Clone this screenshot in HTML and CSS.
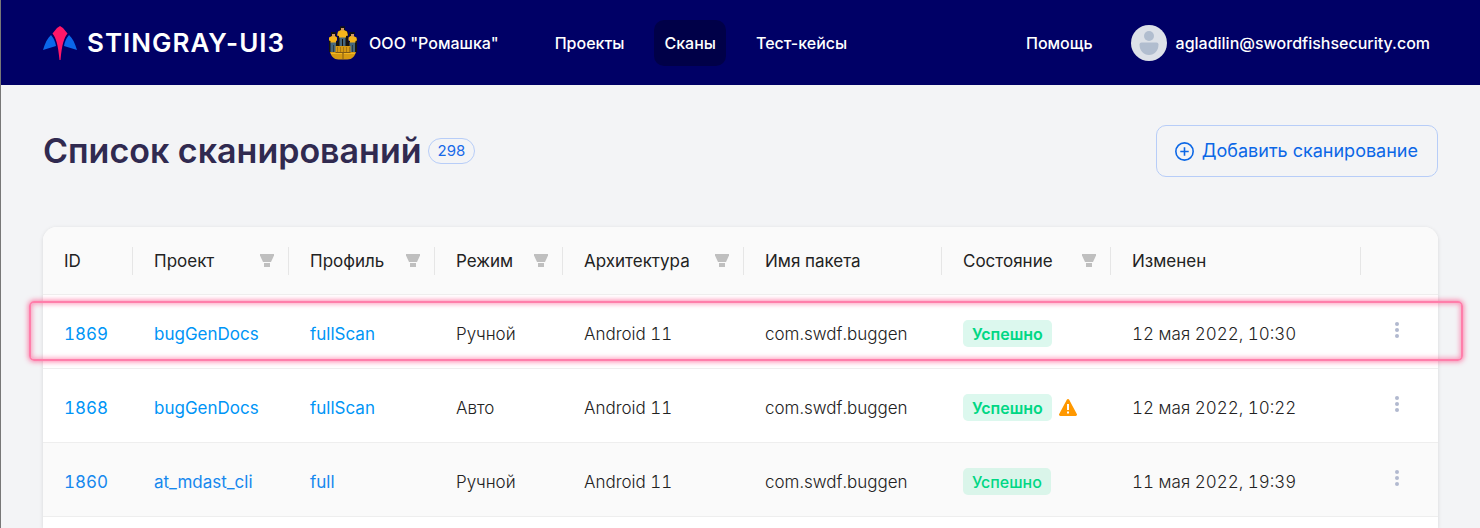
FILE: index.html
```html
<!DOCTYPE html>
<html lang="ru">
<head>
<meta charset="utf-8">
<title>Список сканирований</title>
<link rel="stylesheet" href="styles.css">
</head>
<body>
<svg class="sprite" aria-hidden="true">
  <symbol id="filter" viewBox="0 0 14 13"><path d="M0 0h14v1.500L11 8H3L0 1.500z"/><path d="M4 9h6v4H4z"/></symbol>
  <symbol id="dots" viewBox="0 0 4 16"><circle cx="2" cy="2" r="2"/><circle cx="2" cy="8" r="2"/><circle cx="2" cy="14" r="2"/></symbol>
</svg>
<header class="topbar">
  <a class="brand" href="#">
    <svg class="brand-mark" viewBox="0 0 34 34" aria-hidden="true">
      <path fill="#0b67ea" d="M8 9C4.500 12 2 17 0 24l13-4q-.8-6-5-11zM26 9c3.500 3 6 8 8 15l-13-4q.8-6 5-11z"/>
      <path fill="#ff1768" d="M17 0l-3 2-4.500 5.500C13 12 15 18 16.500 34h1C19 18 21 12 24.500 7.500L20 2z"/>
    </svg>
    <span>STINGRAY-UI3</span>
  </a>
  <a class="company" href="#">
    <svg class="company-logo" viewBox="0 0 28 34" aria-hidden="true">
      <path fill="#17130c" d="M11 .5h5V4l3 2v9l1 1V8l1-2h4v4l3 2v14H0V12l2-2V6h4l1 2v8l2-1V6l2-2z"/>
      <path fill="#46677c" d="M10.500 11h6v9h-2.500v-7h-1v7h-2.500zM1.500 16h5.500v10H4.500v-7h-.5v7H1.500zM20.500 16H26v10h-2v-7h-.5v7h-3z"/>
      <path fill="#f5b41c" d="M9 5.500L12 4h3l3 1.500 1 4-2 .5v1.500h-7V10l-2-.5zM0 11.500L3 10h3l2 1.500v3l-1 .5v1.500H1.500V15L0 14.500zM19.500 11.500l2-1.500h3l3 1.500.5 3-1.500.5v1.500h-5.500V15l-1.500-.5z"/>
      <path fill="#d19761" d="M12 2h3v2.500h-3zM3 8h3v2.500H3zM22 8h3v2.500h-3z"/>
      <path fill="#101017" d="M12 .5h4V2h-4zM3 6h4v2H3zM22 6h4v2h-4z"/>
      <path fill="#d69a12" d="M6.500 20h15v6H27c-1 4-4 7.500-8.500 7.500h-9C5 33.500 2 30 1 26h5.500z"/>
      <path fill="#a77713" d="M8 21h1v5H8zM11 21h1v5h-1zM14 21h1v5h-1zM17 21h1v5h-1zM20 21h1v5h-1z"/>
      <path fill="#f2b723" d="M2 27h11v1H2zM15 27h11v1H15z"/>
      <path fill="#815b16" d="M13.500 27h1v6.500h-1zM6.500 26h15v1h-15z"/>
    </svg>
    <span>ООО "Ромашка"</span>
  </a>
  <nav class="nav">
    <a href="#">Проекты</a>
    <a class="active" href="#" aria-current="page">Сканы</a>
    <a href="#">Тест-кейсы</a>
  </nav>
  <a class="help" href="#">Помощь</a>
  <a class="user" href="#">
    <svg class="avatar" viewBox="0 0 36 36" aria-hidden="true">
      <circle cx="18" cy="18" r="18" fill="#dde1e8"/>
      <circle cx="18" cy="11" r="5" fill="#b1bdcf"/>
      <path fill="#b1bdcf" d="M10.500 17.500h15a2 2 0 0 1 2 2c0 6-4 10.500-9.500 10.500S8.500 25.500 8.500 19.500a2 2 0 0 1 2-2z"/>
    </svg>
    <span>agladilin@swordfishsecurity.com</span>
  </a>
</header>
<main class="page">
  <div class="page-head">
    <h1>Список сканирований</h1>
    <span class="count">298</span>
    <button class="add" type="button">
      <svg viewBox="0 0 18 18" aria-hidden="true"><circle cx="9" cy="9" r="8.200"/><path d="M9 5v8M5 9h8"/></svg>
      <span>Добавить сканирование</span>
    </button>
  </div>
  <div class="card">
    <table class="scans">
      <colgroup><col class="c-id"><col class="c-project"><col class="c-profile"><col class="c-mode"><col class="c-arch"><col class="c-package"><col class="c-state"><col class="c-date"><col class="c-menu"></colgroup>
      <thead>
        <tr>
          <th><div class="th">ID</div></th>
          <th><div class="th">Проект<button type="button" aria-label="Фильтр: проект"><svg><use href="#filter"/></svg></button></div></th>
          <th><div class="th">Профиль<button type="button" aria-label="Фильтр: профиль"><svg><use href="#filter"/></svg></button></div></th>
          <th><div class="th">Режим<button type="button" aria-label="Фильтр: режим"><svg><use href="#filter"/></svg></button></div></th>
          <th><div class="th">Архитектура<button type="button" aria-label="Фильтр: архитектура"><svg><use href="#filter"/></svg></button></div></th>
          <th><div class="th">Имя пакета</div></th>
          <th><div class="th">Состояние<button type="button" aria-label="Фильтр: состояние"><svg><use href="#filter"/></svg></button></div></th>
          <th><div class="th">Изменен</div></th>
          <th><div class="th"></div></th>
        </tr>
      </thead>
      <tbody>
        <tr class="marked">
          <td><a href="#">1869</a></td><td><a href="#">bugGenDocs</a></td><td><a href="#">fullScan</a></td><td>Ручной</td><td>Android 11</td><td>com.swdf.buggen</td>
          <td><div class="state"><span class="tag">Успешно</span></div></td>
          <td>12 мая 2022, 10:30</td>
          <td><button class="menu" type="button" aria-label="Действия"><svg><use href="#dots"/></svg></button></td>
        </tr>
        <tr>
          <td><a href="#">1868</a></td><td><a href="#">bugGenDocs</a></td><td><a href="#">fullScan</a></td><td>Авто</td><td>Android 11</td><td>com.swdf.buggen</td>
          <td><div class="state"><span class="tag">Успешно</span><svg class="warn" viewBox="0 0 18 17" role="img" aria-label="Предупреждение"><path fill="#ff9800" d="M7.800.7a1.400 1.400 0 0 1 2.400 0l7.600 14.200a1.400 1.400 0 0 1-1.200 2.100H1.400a1.400 1.400 0 0 1-1.200-2.100z"/><path fill="#fff" d="M8 5h2v6H8zM8 12.500h2v2H8z"/></svg></div></td>
          <td>12 мая 2022, 10:22</td>
          <td><button class="menu" type="button" aria-label="Действия"><svg><use href="#dots"/></svg></button></td>
        </tr>
        <tr class="hovered">
          <td><a href="#">1860</a></td><td><a href="#">at_mdast_cli</a></td><td><a href="#">full</a></td><td>Ручной</td><td>Android 11</td><td>com.swdf.buggen</td>
          <td><div class="state"><span class="tag">Успешно</span></div></td>
          <td>11 мая 2022, 19:39</td>
          <td><button class="menu" type="button" aria-label="Действия"><svg><use href="#dots"/></svg></button></td>
        </tr>
      </tbody>
    </table>
  </div>
</main>
</body>
</html>
```
FILE: styles.css
```css
* { box-sizing: border-box; }
body {
  margin: 0;
  min-height: 100vh;
  display: flex;
  flex-direction: column;
  border-left: 1px solid #777;
  background: #f3f4f6;
  color: #222;
  font: 300 17px/24px Inter, "Noto Sans", sans-serif;
}
a { color: inherit; text-decoration: none; }
button { font: inherit; border: 0; background: none; padding: 0; cursor: pointer; }
.sprite { display: none; }

.topbar {
  display: flex;
  align-items: center;
  height: 85px;
  padding: 0 50px 0 42px;
  background: #000066;
  color: #fff;
  font-size: 16px;
  font-weight: 500;
  white-space: nowrap;
}
.brand { display: flex; align-items: center; gap: 10px; font-size: 26px; font-weight: 600; letter-spacing: 1px; }
.brand-mark { width: 34px; height: 34px; }
.company { display: flex; align-items: center; gap: 12px; margin-left: 44px; }
.company-logo { width: 28px; height: 34px; }
.nav { display: flex; gap: 20px; margin-left: 46px; }
.nav a { padding: 11px 10px; border-radius: 10px; }
.nav .active { background: #000048; }
.help { margin-left: auto; }
.user { display: flex; align-items: center; gap: 9px; margin-left: 38px; }
.avatar { width: 36px; height: 36px; }

.page { flex: 1; display: flex; flex-direction: column; padding: 40px 42px 0; }
.page-head { display: flex; align-items: center; margin-bottom: 50px; }
h1 { margin: 0; color: #302a50; font-size: 34px; line-height: 48px; font-weight: 600; }
.count {
  margin-left: 6px;
  padding: 0 9px;
  border: 1px solid #b7cdf8;
  border-radius: 13px;
  color: #1769e8;
  font-size: 15px;
  font-weight: 400;
}
.add {
  display: flex;
  align-items: center;
  gap: 8px;
  height: 52px;
  margin-left: auto;
  padding: 0 19px 0 18px;
  border: 1px solid #b7cdf8;
  border-radius: 10px;
  color: #0b67e6;
  font-size: 18px;
  font-weight: 400;
}
.add svg { width: 19px; height: 19px; fill: none; stroke: currentColor; stroke-width: 1.500; }

.card { flex: 1; background: #fff; border-radius: 14px 14px 0 0; box-shadow: 0 1px 4px rgba(0, 0, 0, .12); }
.scans { width: 100%; table-layout: fixed; border-collapse: separate; border-spacing: 0; font-variant-numeric: tabular-nums; }
.c-id { width: 90px; }
.c-project { width: 156px; }
.c-profile { width: 146px; }
.c-mode { width: 128px; }
.c-arch { width: 181px; }
.c-package { width: 198px; }
.c-state { width: 169px; }
.c-menu { width: 77px; }
th { height: 68px; padding: 0; background: #fafafa; border-bottom: 1px solid #eee; font-weight: 400; text-align: left; }
th:first-child { border-top-left-radius: 14px; }
th:last-child { border-top-right-radius: 14px; }
.th { display: flex; align-items: center; justify-content: space-between; height: 28px; padding: 0 14px 0 21px; border-right: 1px solid #e6e6e6; }
th:last-child .th { border-right: 0; }
.th button { display: flex; }
.th svg { width: 14px; height: 13px; fill: #bfbfbf; }
td { height: 74px; padding: 4px 0 0 21px; border-bottom: 1px solid #eee; white-space: nowrap; }
td a { color: #0095f6; font-weight: 400; }
.hovered td { background: #fafafa; }
.hovered a { color: #1688ee; }
.state { display: flex; align-items: center; gap: 7px; }
.tag { padding: 2px 9px 1px; border-radius: 5px; background: #dcf8ee; color: #00d784; font-size: 16px; font-weight: 600; }
.hovered .tag { background: #daf5ea; font-weight: 500; }
.warn { width: 18px; height: 17px; }
.menu { display: flex; padding: 0 13px 8px; }
.menu svg { width: 4px; height: 16px; fill: #b1b9cf; }
.marked { position: relative; }
.marked td:first-child::after {
  content: "";
  position: absolute;
  inset: 6px -25px 8px -14px;
  border: 2px solid #ff7eaa;
  border-radius: 5px;
  box-shadow: 0 0 5px 1px rgba(255, 60, 125, .6), inset 0 0 5px 1px rgba(255, 60, 125, .5);
  pointer-events: none;
}
```
